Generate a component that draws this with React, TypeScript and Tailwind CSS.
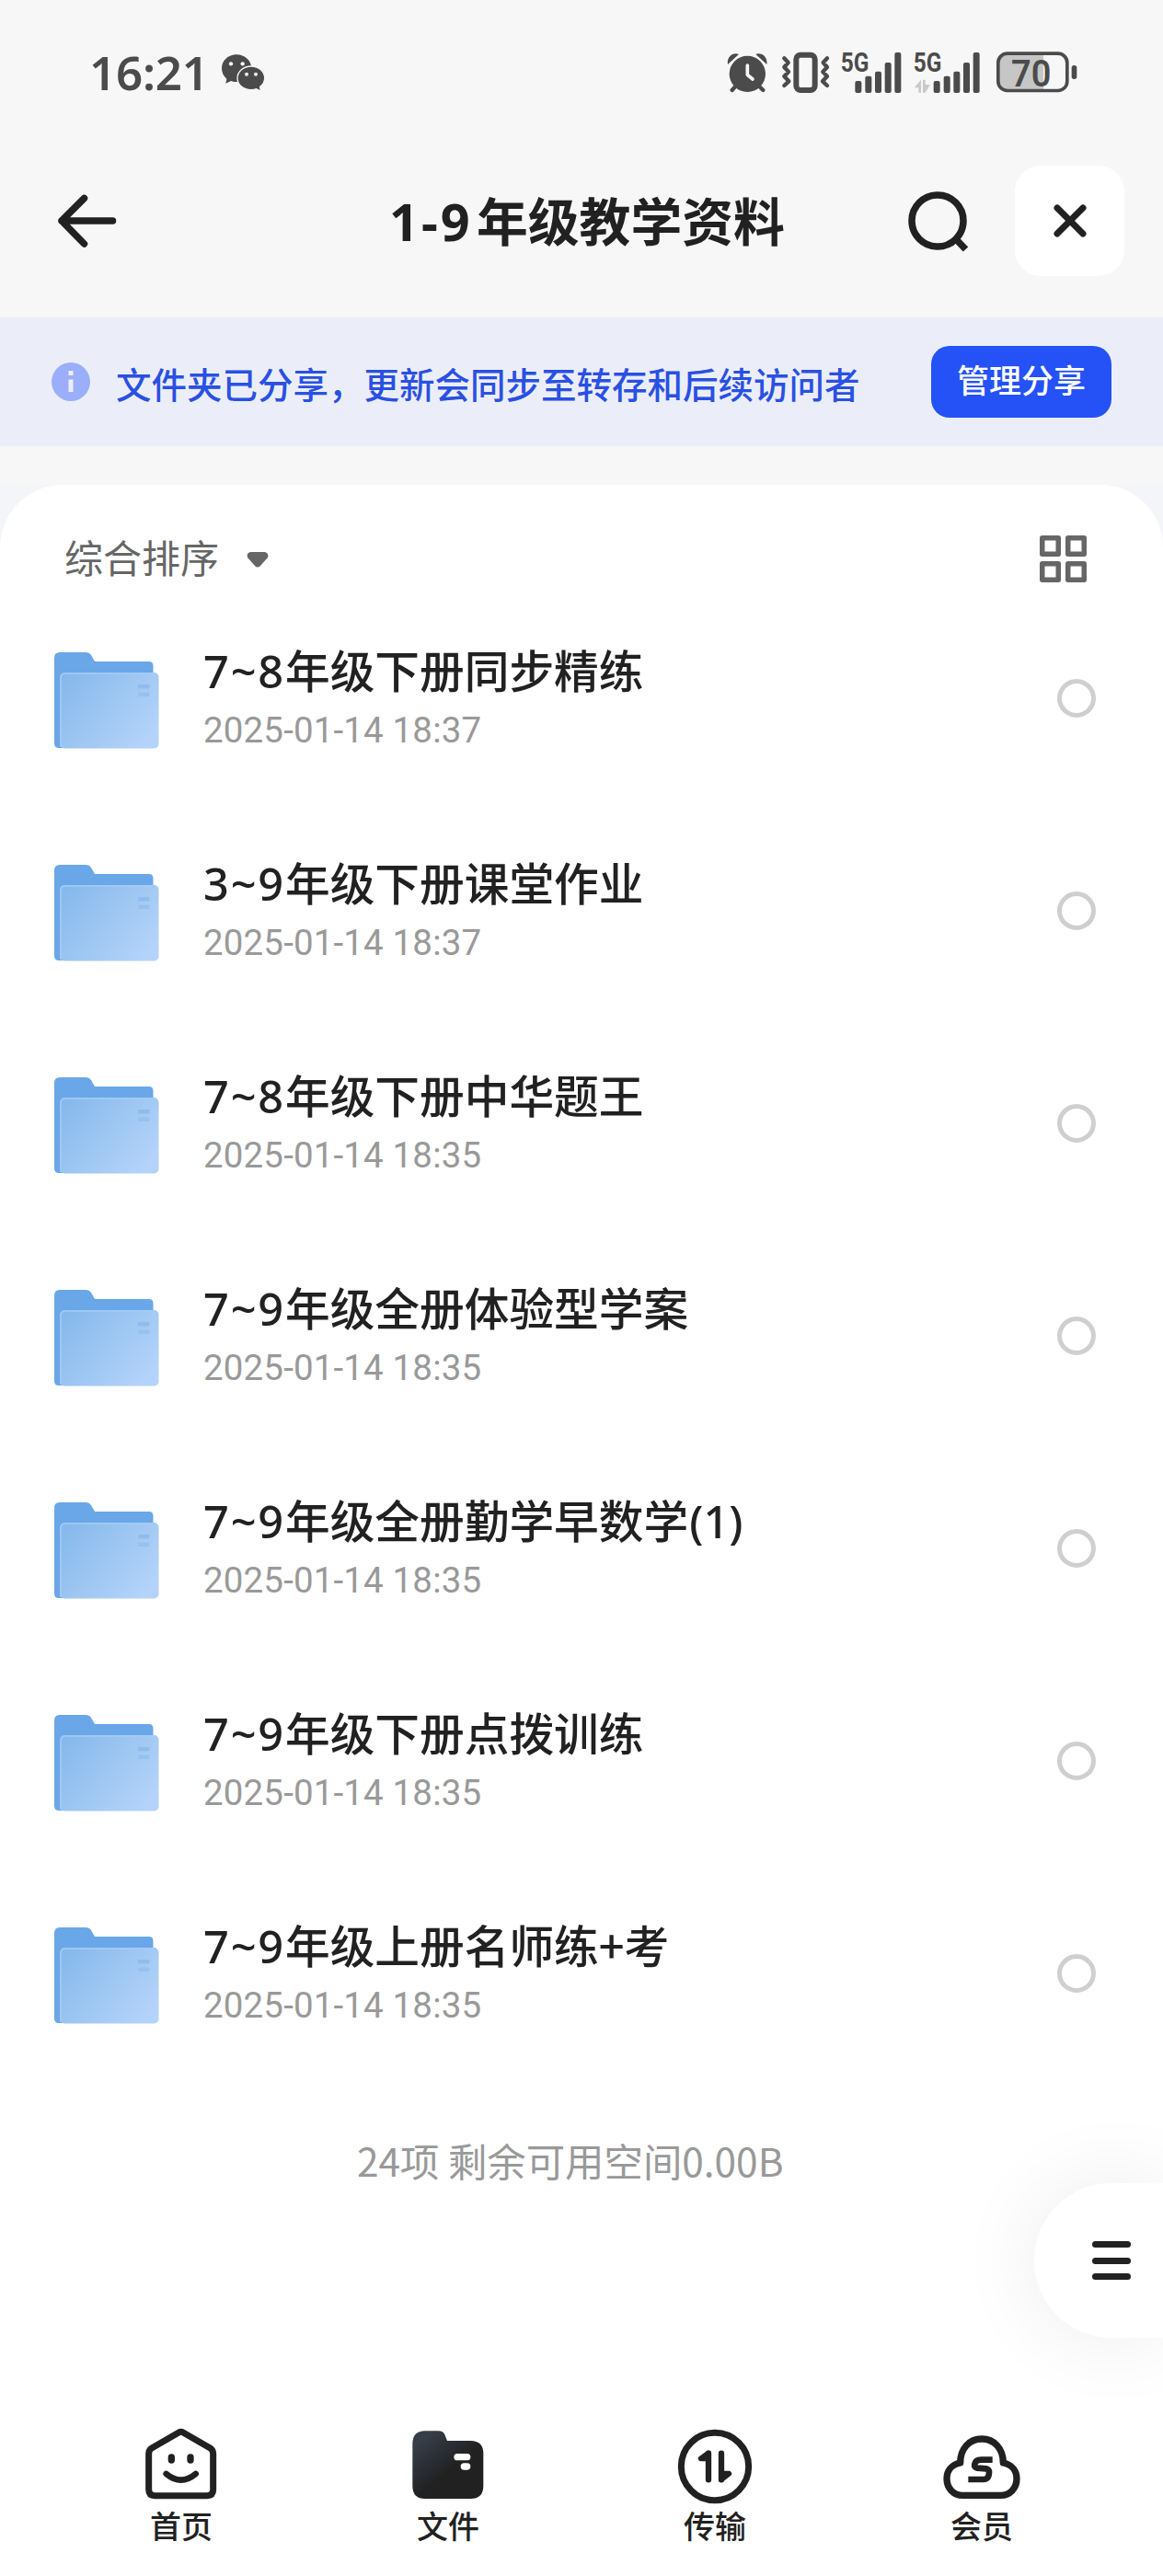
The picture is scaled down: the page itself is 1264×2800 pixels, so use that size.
import { useState } from 'react';
import type { ReactNode } from 'react';

interface FolderItem {
  id: number;
  prefix: string;
  name: string;
  suffix?: string;
  date: string;
}

const folders: FolderItem[] = [
  { id: 1, prefix: '7~8', name: '年级下册同步精练', date: '2025-01-14 18:37' },
  { id: 2, prefix: '3~9', name: '年级下册课堂作业', date: '2025-01-14 18:37' },
  { id: 3, prefix: '7~8', name: '年级下册中华题王', date: '2025-01-14 18:35' },
  { id: 4, prefix: '7~9', name: '年级全册体验型学案', date: '2025-01-14 18:35' },
  { id: 5, prefix: '7~9', name: '年级全册勤学早数学', suffix: '(1)', date: '2025-01-14 18:35' },
  { id: 6, prefix: '7~9', name: '年级下册点拨训练', date: '2025-01-14 18:35' },
  { id: 7, prefix: '7~9', name: '年级上册名师练+考', date: '2025-01-14 18:35' },
];

function WechatIcon() {
  return (
    <svg width="48" height="42" viewBox="540 86 144 126" className="text-[#4b4b4b]" fill="currentColor">
      <path d="M591 90c-27 0-48 20-48 45 0 14 6 26 16 34l-3 15 17-8c6 2 12 3 20 3 26 0 47-20 47-44 0-25-22-45-49-45z" />
      <path d="M639 128c-25 0-45 17-45 39s20 38 45 38c6 0 12-1 17-3l14 7-2-14c9-7 15-17 15-28 0-22-19-39-44-39z" stroke="#f7f7f7" strokeWidth="4" />
      <g fill="#f7f7f7">
        <circle cx="573" cy="120" r="6.5" />
        <circle cx="611" cy="120" r="6.5" />
        <circle cx="624" cy="154" r="6" />
        <circle cx="654" cy="154" r="6" />
      </g>
    </svg>
  );
}

function AlarmIcon() {
  return (
    <svg width="44" height="44" viewBox="88 84 132 132" fill="none" stroke="#4b4b4b">
      <circle cx="155" cy="154" r="59" fill="#4b4b4b" stroke="none" />
      <path d="M113 198l-8 9M197 198l9 9" strokeWidth="13" strokeLinecap="round" />
      <path d="M127 90c-20-8-40 10-36 33zM182 90c20-8 40 10 36 33z" fill="#4b4b4b" stroke="none" />
      <path d="M155 126v31l17 14" stroke="#f7f7f7" strokeWidth="11" strokeLinecap="round" strokeLinejoin="round" />
    </svg>
  );
}

function VibrateIcon() {
  return (
    <svg width="54" height="46" viewBox="267 81 162 138" fill="none" stroke="#4b4b4b" strokeLinecap="round" strokeLinejoin="round">
      <rect x="316" y="92" width="61" height="115" rx="14" strokeWidth="18" />
      <path d="M277 103l13 14-13 15 14 15-14 15 15 16-15 14M417 103l-13 14 13 15-14 15 14 15-15 16 15 14" strokeWidth="13" />
    </svg>
  );
}

function SignalIcon({ transfer = false }: { transfer?: boolean }) {
  const offset = transfer ? 19 : 0;
  return (
    <svg
      width={transfer ? 73 : 67}
      height="46"
      viewBox={transfer ? '464 78 219 138' : '464 78 201 138'}
      className="overflow-visible"
    >
      <text
        x="463"
        y="145"
        textLength="92"
        lengthAdjust="spacingAndGlyphs"
        className="font-['Roboto',sans-serif] text-[88px] font-bold"
        fill="#4b4b4b"
      >
        5G
      </text>
      {transfer && (
        <path d="M466 196l22-26v42h-8v-16zM494 170h8v16h16l-16 26h-8z" fill="#c9c9c9" />
      )}
      <g fill="#4b4b4b">
        <rect x={510 + offset} y="174" width="21" height="39" rx="6" />
        <rect x={543 + offset} y="158" width="21" height="55" rx="6" />
        <rect x={575 + offset} y="143" width="21" height="70" rx="6" />
        <rect x={607 + offset} y="114" width="21" height="99" rx="6" />
        <rect x={639 + offset} y="81" width="21" height="132" rx="6" />
      </g>
    </svg>
  );
}

function BatteryIcon() {
  return (
    <svg width="88" height="46" viewBox="968 78 264 138" className="overflow-visible">
      <path d="M1004 86h117v118h-117q-28 0-28-28v-62q0-28 28-28z" fill="#c6c6c6" />
      <rect x="973.5" y="84.5" width="225" height="121" rx="30" fill="none" stroke="#4b4b4b" strokeWidth="11" />
      <rect x="1213" y="123" width="17" height="45" rx="8" fill="#4b4b4b" />
      <text
        x="1016"
        y="191"
        textLength="130"
        lengthAdjust="spacingAndGlyphs"
        className="font-['Roboto',sans-serif] text-[120px] font-semibold"
        fill="#4b4b4b"
      >
        70
      </text>
    </svg>
  );
}

function FolderIcon() {
  return (
    <svg width="114" height="105" viewBox="0 0 114 105" className="shrink-0">
      <defs>
        <linearGradient id="folderFront" x1="0" y1="0.1" x2="1" y2="0.75">
          <stop offset="0" stopColor="#85b8ec" />
          <stop offset="0.45" stopColor="#9bc5f1" />
          <stop offset="1" stopColor="#b4d3fa" />
        </linearGradient>
      </defs>
      <path d="M0 6q0-6 6-6h28q4 0 6 3l4 7h59q4.500 0 4.500 5v89H5q-5 0-5-5z" fill="#69a7e8" />
      <rect x="6" y="22" width="107.500" height="82.500" rx="5" fill="url(#folderFront)" />
      <path d="M7 103V28q0-5 5-5h96" fill="none" stroke="#a5cbf3" strokeWidth="1.500" />
      <rect x="91" y="35" width="12.500" height="4.500" rx="1" fill="#8fbced" />
      <rect x="91" y="43.500" width="12.500" height="4.500" rx="1" fill="#97c1ef" />
    </svg>
  );
}

function HomeIcon() {
  return (
    <svg width="78" height="78" viewBox="116 121 234 234" fill="none" stroke="#212121" strokeLinecap="round" strokeLinejoin="round">
      <path d="M225 136q7-4 14 0l87 50q11 7 11 19v117q0 20-20 20H147q-20 0-20-20V205q0-12 11-19z" strokeWidth="21" />
      <path d="M201 217v9M263 217v9" strokeWidth="22" />
      <path d="M184 271q48 40 96 0" strokeWidth="20" />
    </svg>
  );
}

function FilesIcon() {
  return (
    <svg width="78" height="75" viewBox="985 131 234 225">
      <defs>
        <linearGradient id="filesBody" x1="0.1" y1="0.15" x2="0.5" y2="0.6">
          <stop offset="0" stopColor="#373e47" />
          <stop offset="0.5" stopColor="#2b3037" />
          <stop offset="1" stopColor="#212121" />
        </linearGradient>
      </defs>
      <path
        d="M1027 132h44q15 0 20 12l8 20h76q42 0 42 42v105q0 42-42 42h-148q-41 0-41-42V174q0-42 41-42z"
        fill="url(#filesBody)"
      />
      <rect x="1121" y="206" width="54" height="22" rx="11" fill="#fff" />
      <rect x="1143" y="237" width="32" height="22" rx="11" fill="#fff" />
    </svg>
  );
}

function TransferIcon() {
  return (
    <svg width="82" height="82" viewBox="108 125 246 246" fill="none" stroke="#212121" strokeLinecap="round" strokeLinejoin="round">
      <circle cx="231" cy="248" r="110" strokeWidth="21" />
      <path d="M210 205v86" strokeWidth="19" />
      <path d="M210 204l-25 18h25z" strokeWidth="17" fill="#212121" />
      <path d="M252 205v86" strokeWidth="19" />
      <path d="M252 291l25-20h-25z" strokeWidth="17" fill="#212121" />
    </svg>
  );
}

function MemberIcon() {
  return (
    <svg width="84" height="70" viewBox="974 146 252 210" fill="none" stroke="#212121" strokeLinejoin="round">
      <path
        d="M1030 236C1030 189 1060 158 1100 158S1170 189 1170 236C1199 242 1214 263 1214 287C1214 319 1192 342 1162 342H1038C1008 342 986 319 986 287C986 263 1001 242 1030 236Z"
        strokeWidth="22"
      />
      <path d="M1135 226h-37q-18 0-21 14v1q-2 9 9 12l28 2q10 2 10 12l-1 9q-3 14-17 14h-50" strokeWidth="20" />
    </svg>
  );
}

interface TabProps {
  label: string;
  children: ReactNode;
}

function Tab({ label, children }: TabProps) {
  return (
    <button className="flex w-[290px] flex-col items-center">
      <span className="flex h-[84px] items-end justify-center">{children}</span>
      <span className="text-[34px] font-medium leading-[42px] text-[#212121]">{label}</span>
    </button>
  );
}

export default function App() {
  const [selected, setSelected] = useState<number[]>([]);

  const toggle = (id: number) => {
    setSelected((prev) => (prev.includes(id) ? prev.filter((x) => x !== id) : [...prev, id]));
  };

  return (
    <div className="relative flex h-[2800px] w-[1264px] flex-col overflow-hidden bg-[#f7f7f7] font-['Noto_Sans_CJK_SC',sans-serif] text-[#212121]">
      {/* status bar */}
      <div className="flex h-[158px] shrink-0 items-center pl-[97px] text-[#4b4b4b]">
        <span className="mb-[2px] w-[143px] font-['Noto_Sans',sans-serif] text-[51px] font-semibold leading-[60px] tracking-[-0.2px]">
          16:21
        </span>
        <WechatIcon />
        <div className="ml-auto flex items-center pr-[93px]">
          <AlarmIcon />
          <span className="w-[15px]" />
          <VibrateIcon />
          <span className="w-[11px]" />
          <SignalIcon />
          <span className="w-[12px]" />
          <SignalIcon transfer />
          <span className="w-[17px]" />
          <BatteryIcon />
        </div>
      </div>

      {/* header */}
      <header className="flex h-[164px] shrink-0 items-center pl-[60px] pr-[42px]">
        <button>
          <svg width="68" height="64" viewBox="0 0 68 64" fill="none" stroke="#212121" strokeWidth="7.500" strokeLinecap="round" strokeLinejoin="round">
            <path d="M31.500 7.500L7 32l24.500 25M7 32h55.500" />
          </svg>
        </button>
        <h1 className="mb-[2px] ml-[295px] flex items-baseline text-[55.8px] font-bold leading-[80px]">
          <span className="w-[95px] font-['Noto_Sans',sans-serif] tracking-[3px]">1-9</span>
          年级教学资料
        </h1>
        <button className="ml-auto">
          <svg width="68" height="68" viewBox="0 0 68 68" fill="none" stroke="#212121" strokeWidth="7.500">
            <circle cx="34" cy="34" r="28" />
            <path d="M54 54l10.500 11" />
          </svg>
        </button>
        <button className="ml-[50px] flex h-[120px] w-[119px] items-center justify-center rounded-[28px] bg-white">
          <svg width="40" height="40" viewBox="0 0 40 40" fill="none" stroke="#212121" strokeWidth="7" strokeLinecap="round">
            <path d="M6 6l28 28M34 6L6 34" />
          </svg>
        </button>
      </header>

      {/* share banner */}
      <div className="mt-[23px] flex h-[140px] shrink-0 items-center bg-[#ebeef8] pl-[56px] pr-[56px]">
        <svg width="42" height="42" viewBox="0 0 42 42">
          <circle cx="21" cy="21" r="21" fill="#9baefa" />
          <path d="M18.500 9h5v5h-5zM18.500 18.500h5V32h-5z" fill="#ebeef8" />
        </svg>
        <p className="ml-[28px] mt-[2px] text-[38.5px] font-medium leading-[50px] text-[#2a50e2]">
          文件夹已分享，更新会同步至转存和后续访问者
        </p>
        <button className="ml-auto flex h-[78px] w-[196px] items-center justify-center rounded-[20px] bg-[#2452f6] pb-[7px] text-[35px] font-medium leading-[44px] text-white">
          管理分享
        </button>
      </div>

      {/* file list */}
      <div className="mt-[42px] flex grow flex-col bg-[#f4f5f8]">
        <main className="flex grow flex-col rounded-t-[68px] bg-white">
          <div className="flex h-[119px] items-center pl-[70px] pr-[83px] pt-[41px] text-[#666]">
            <span className="mb-[5px] text-[42px] leading-[56px]">综合排序</span>
            <svg width="24" height="17" viewBox="0 0 24 17" className="ml-[30px] mt-[3px]" fill="currentColor">
              <path d="M4 0h16q4.500 1.500 3 6l-8 9q-3 3-6 0L1 6q-1.500-4.500 3-6z" />
            </svg>
            <svg width="51" height="51" viewBox="0 0 51 51" className="ml-auto" fill="none" stroke="currentColor" strokeWidth="5.500" strokeLinejoin="round">
              <path d="M2.750 2.750h17.500v17.500H2.750zM30.750 2.750h17.500v17.500h-17.500zM2.750 30.750h17.500v17.500H2.750zM30.750 30.750h17.500v17.500h-17.500z" />
            </svg>
          </div>

          <ul>
            {folders.map((item) => (
              <li key={item.id} className="flex h-[231px] items-center pb-[1px] pl-[59px] pr-[73px]">
                <FolderIcon />
                <div className="mb-[9px] ml-[48px] flex flex-col gap-[13px]">
                  <span className="flex items-baseline whitespace-nowrap text-[48.7px] font-medium leading-[60px]">
                    <span className="w-[89px] font-['Noto_Sans',sans-serif] tracking-[1.8px]">{item.prefix}</span>
                    {item.name}
                    {item.suffix && <span className="ml-[1px] font-['Noto_Sans',sans-serif]">{item.suffix}</span>}
                  </span>
                  <span className="font-['Roboto',sans-serif] text-[38.5px] leading-[44px] tracking-[0.15px] text-[#999]">
                    {item.date}
                  </span>
                </div>
                <button
                  onClick={() => toggle(item.id)}
                  className={`mb-[5px] ml-auto size-[42px] rounded-full border-[5px] ${
                    selected.includes(item.id) ? 'border-[#2452f6] bg-[#2452f6]' : 'border-[#cfcfd2]'
                  }`}
                />
              </li>
            ))}
          </ul>

          <p className="pl-[388px] pt-[57px] text-[42.4px] leading-[56px] text-[#999]">
            24项 剩余可用空间0.00B
          </p>

          {/* bottom tabs */}
          <nav className="mb-[34px] mt-auto flex justify-center">
            <Tab label="首页">
              <span className="mb-[7px]"><HomeIcon /></span>
            </Tab>
            <Tab label="文件">
              <span className="mb-[7px]"><FilesIcon /></span>
            </Tab>
            <Tab label="传输">
              <span className="mb-[2px]"><TransferIcon /></span>
            </Tab>
            <Tab label="会员">
              <span className="mb-[7px]"><MemberIcon /></span>
            </Tab>
          </nav>
        </main>
      </div>

      {/* floating menu */}
      <button className="absolute right-0 top-[2373px] flex h-[168px] w-[140px] items-center rounded-l-full bg-white pl-[63px] shadow-[0_0_90px_rgba(0,0,0,0.08)]">
        <span className="flex w-[42px] flex-col gap-[10.5px]">
          <span className="h-[7px] rounded-full bg-[#212121]" />
          <span className="h-[7px] rounded-full bg-[#212121]" />
          <span className="h-[7px] rounded-full bg-[#212121]" />
        </span>
      </button>
    </div>
  );
}
